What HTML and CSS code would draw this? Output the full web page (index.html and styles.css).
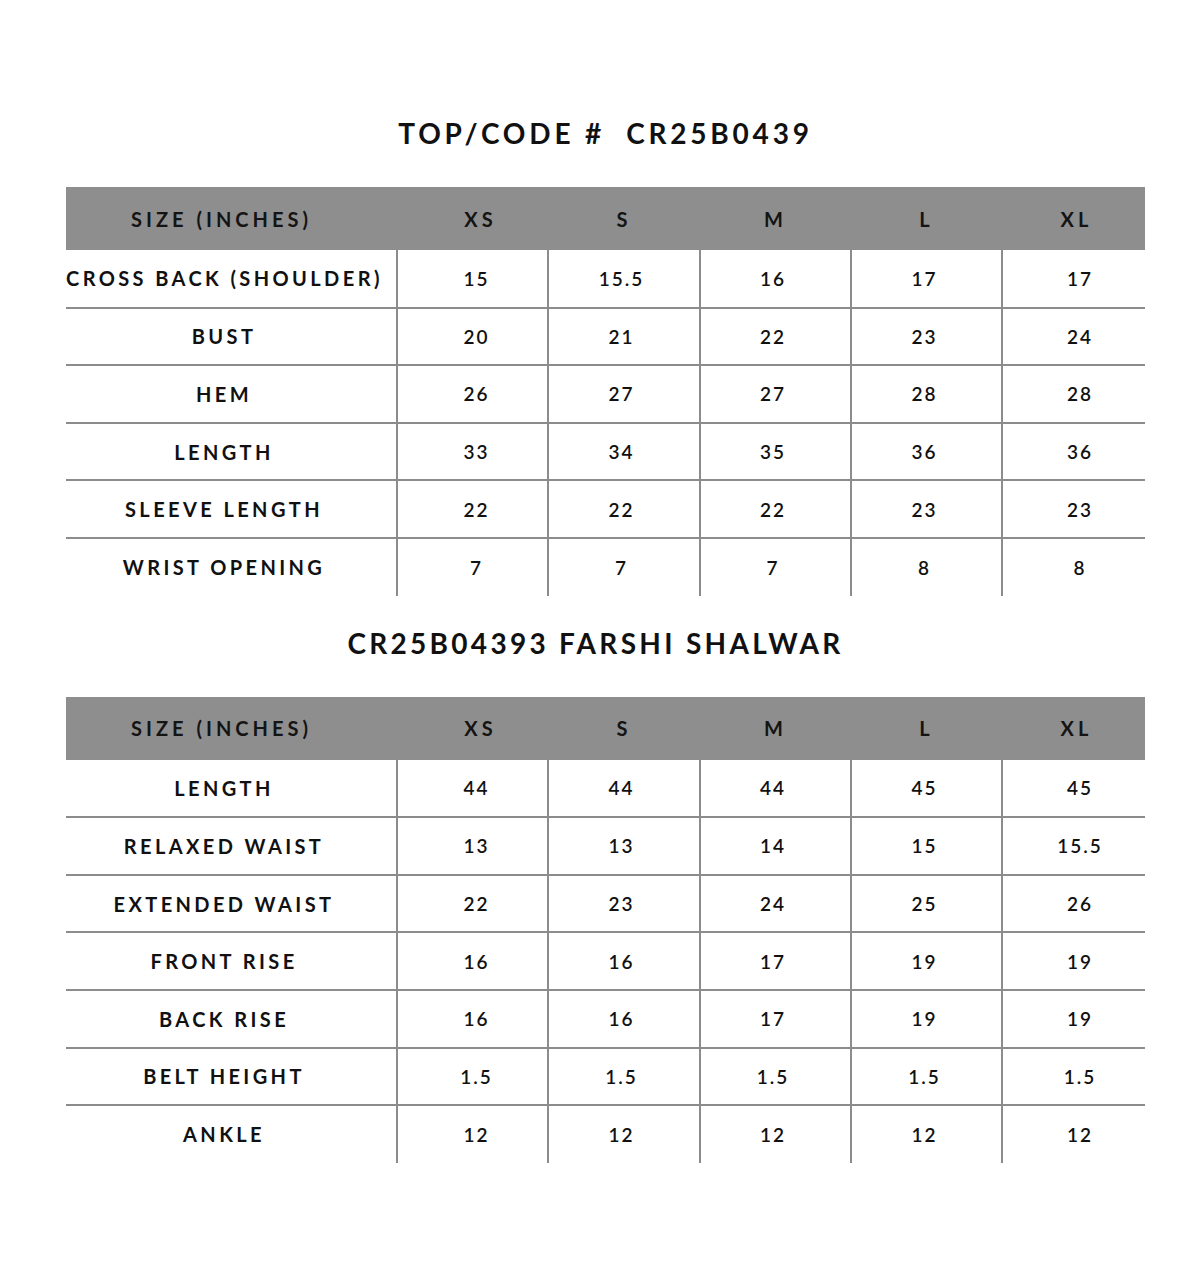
FILE: index.html
```html
<!DOCTYPE html>
<html>
<head>
<meta charset="utf-8">
<link rel="stylesheet" href="styles.css">
</head>
<body>
<div class="page">
  <h2 class="title">TOP/CODE #&nbsp; CR25B0439</h2>
  <table class="chart">
    <thead>
      <tr><th class="label">SIZE (INCHES)</th><th>XS</th><th>S</th><th>M</th><th>L</th><th>XL</th></tr>
    </thead>
    <tbody>
      <tr><td class="label">CROSS BACK (SHOULDER)</td><td>15</td><td>15.5</td><td>16</td><td>17</td><td>17</td></tr>
      <tr><td class="label">BUST</td><td>20</td><td>21</td><td>22</td><td>23</td><td>24</td></tr>
      <tr><td class="label">HEM</td><td>26</td><td>27</td><td>27</td><td>28</td><td>28</td></tr>
      <tr><td class="label">LENGTH</td><td>33</td><td>34</td><td>35</td><td>36</td><td>36</td></tr>
      <tr><td class="label">SLEEVE LENGTH</td><td>22</td><td>22</td><td>22</td><td>23</td><td>23</td></tr>
      <tr><td class="label">WRIST OPENING</td><td>7</td><td>7</td><td>7</td><td>8</td><td>8</td></tr>
    </tbody>
  </table>

  <h2 class="title second">CR25B04393 FARSHI SHALWAR</h2>
  <table class="chart">
    <thead>
      <tr><th class="label">SIZE (INCHES)</th><th>XS</th><th>S</th><th>M</th><th>L</th><th>XL</th></tr>
    </thead>
    <tbody>
      <tr><td class="label">LENGTH</td><td>44</td><td>44</td><td>44</td><td>45</td><td>45</td></tr>
      <tr><td class="label">RELAXED WAIST</td><td>13</td><td>13</td><td>14</td><td>15</td><td>15.5</td></tr>
      <tr><td class="label">EXTENDED WAIST</td><td>22</td><td>23</td><td>24</td><td>25</td><td>26</td></tr>
      <tr><td class="label">FRONT RISE</td><td>16</td><td>16</td><td>17</td><td>19</td><td>19</td></tr>
      <tr><td class="label">BACK RISE</td><td>16</td><td>16</td><td>17</td><td>19</td><td>19</td></tr>
      <tr><td class="label">BELT HEIGHT</td><td>1.5</td><td>1.5</td><td>1.5</td><td>1.5</td><td>1.5</td></tr>
      <tr><td class="label">ANKLE</td><td>12</td><td>12</td><td>12</td><td>12</td><td>12</td></tr>
    </tbody>
  </table>
</div>
</body>
</html>
```

FILE: styles.css
```css
html, body {
  margin: 0;
  padding: 0;
  background: #ffffff;
}

body {
  font-family: "Lato", "Liberation Sans", sans-serif;
  color: #111111;
}

.page {
  width: 1079px;
  margin: 0 0 0 66px;
  padding-top: 113px;
}

.title {
  margin: 0 0 34px 0;
  height: 40px;
  line-height: 40px;
  font-size: 28px;
  font-weight: 700;
  letter-spacing: 3.8px;
  text-align: center;
}

.title.second {
  margin-top: 27px;
  letter-spacing: 3.3px;
  padding-right: 20px;
}

.chart {
  width: 1079px;
  border-collapse: collapse;
  table-layout: fixed;
}

.chart th,
.chart td {
  box-sizing: border-box;
  padding: 0;
  text-align: center;
  vertical-align: middle;
  white-space: nowrap;
}

.chart th {
  background: #8e8e8e;
  height: 63px;
  font-size: 20px;
  font-weight: 700;
  letter-spacing: 4px;
  color: #141414;
}

.chart th:nth-child(1), .chart td:nth-child(1) { width: 331px; }
.chart th:nth-child(2), .chart td:nth-child(2) { width: 151px; }
.chart th:nth-child(3), .chart td:nth-child(3) { width: 152px; }
.chart th:nth-child(4), .chart td:nth-child(4) { width: 151px; }
.chart th:nth-child(5), .chart td:nth-child(5) { width: 151px; }
.chart th:nth-child(6), .chart td:nth-child(6) { width: 143px; }

.chart th:nth-child(2) { padding-left: 16px; }
.chart th:nth-child(6) { padding-left: 6px; }
.chart td:nth-child(2) { padding-left: 8px; }
.chart td:nth-child(3) { padding-right: 5px; }
.chart td:nth-child(4) { padding-right: 5px; }
.chart td:nth-child(5) { padding-right: 4px; }
.chart td:nth-child(6) { padding-left: 12px; }

.chart td.label {
  padding-right: 14px;
  font-size: 20px;
  letter-spacing: 3.4px;
}

.chart th.label {
  padding-right: 20px;
}

.chart td {
  height: 57.6px;
  font-size: 19px;
  font-weight: 700;
  letter-spacing: 2px;
  color: #111111;
}

.chart td:not(.label) {
  font-weight: 600;
  border-left: 2px solid #8c8c8c;
}

.chart tbody tr + tr td {
  border-top: 2px solid #8c8c8c;
}
```
